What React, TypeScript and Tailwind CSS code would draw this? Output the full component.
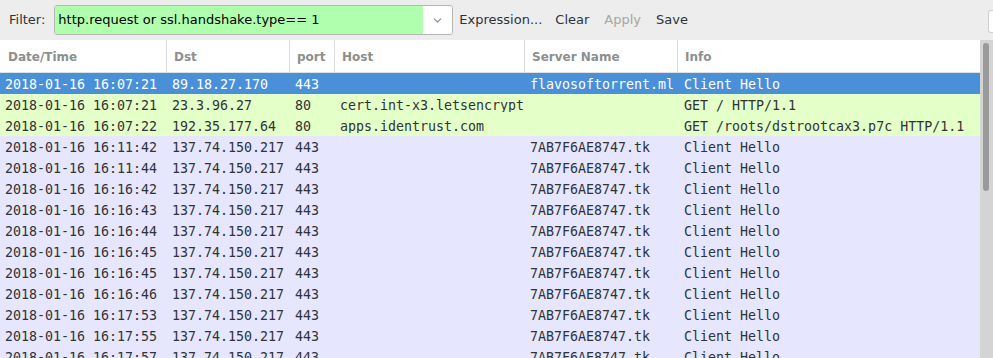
import { ChevronDown } from 'lucide-react'

type Packet = {
  time: string
  dst: string
  port: string
  host: string
  server: string
  info: string
  kind: 'selected' | 'http' | 'tcp'
}

const packets: Packet[] = [
  { time: '2018-01-16 16:07:21', dst: '89.18.27.170', port: '443', host: '', server: 'flavosoftorrent.ml', info: 'Client Hello', kind: 'selected' },
  { time: '2018-01-16 16:07:21', dst: '23.3.96.27', port: '80', host: 'cert.int-x3.letsencrypt', server: '', info: 'GET / HTTP/1.1', kind: 'http' },
  { time: '2018-01-16 16:07:22', dst: '192.35.177.64', port: '80', host: 'apps.identrust.com', server: '', info: 'GET /roots/dstrootcax3.p7c HTTP/1.1', kind: 'http' },
  { time: '2018-01-16 16:11:42', dst: '137.74.150.217', port: '443', host: '', server: '7AB7F6AE8747.tk', info: 'Client Hello', kind: 'tcp' },
  { time: '2018-01-16 16:11:44', dst: '137.74.150.217', port: '443', host: '', server: '7AB7F6AE8747.tk', info: 'Client Hello', kind: 'tcp' },
  { time: '2018-01-16 16:16:42', dst: '137.74.150.217', port: '443', host: '', server: '7AB7F6AE8747.tk', info: 'Client Hello', kind: 'tcp' },
  { time: '2018-01-16 16:16:43', dst: '137.74.150.217', port: '443', host: '', server: '7AB7F6AE8747.tk', info: 'Client Hello', kind: 'tcp' },
  { time: '2018-01-16 16:16:44', dst: '137.74.150.217', port: '443', host: '', server: '7AB7F6AE8747.tk', info: 'Client Hello', kind: 'tcp' },
  { time: '2018-01-16 16:16:45', dst: '137.74.150.217', port: '443', host: '', server: '7AB7F6AE8747.tk', info: 'Client Hello', kind: 'tcp' },
  { time: '2018-01-16 16:16:45', dst: '137.74.150.217', port: '443', host: '', server: '7AB7F6AE8747.tk', info: 'Client Hello', kind: 'tcp' },
  { time: '2018-01-16 16:16:46', dst: '137.74.150.217', port: '443', host: '', server: '7AB7F6AE8747.tk', info: 'Client Hello', kind: 'tcp' },
  { time: '2018-01-16 16:17:53', dst: '137.74.150.217', port: '443', host: '', server: '7AB7F6AE8747.tk', info: 'Client Hello', kind: 'tcp' },
  { time: '2018-01-16 16:17:55', dst: '137.74.150.217', port: '443', host: '', server: '7AB7F6AE8747.tk', info: 'Client Hello', kind: 'tcp' },
  { time: '2018-01-16 16:17:57', dst: '137.74.150.217', port: '443', host: '', server: '7AB7F6AE8747.tk', info: 'Client Hello', kind: 'tcp' },
]

const rowColors = {
  selected: 'bg-[#4a90d9] text-white',
  http: 'bg-[#e4ffc7] text-[#2e3436]',
  tcp: 'bg-[#e7e6ff] text-[#2e3436]',
}

const headers = ['Date/Time', 'Dst', 'port', 'Host', 'Server Name', 'Info']
const cols = 'grid grid-cols-[167px_123px_45px_190px_153px_1fr]'

export default function App() {
  return (
    <div className="w-[993px] h-[358px] overflow-hidden bg-[#ededed] flex flex-col" style={{ fontFamily: '"DejaVu Sans", sans-serif' }}>
      {/* Filter toolbar */}
      <div className="h-[40px] flex items-center text-[13px] text-[#2e3436] shrink-0">
        <span className="ml-[9px] mr-[9px]">Filter:</span>
        <div className="w-[399px] h-[30px] flex border border-[#b6b6b3] rounded-[3px] overflow-hidden">
          <div className="flex-1 bg-[#afffaf] flex items-center pl-[3px] text-black">
            http.request or ssl.handshake.type== 1
          </div>
          <div className="w-[29px] bg-white flex items-center justify-center">
            <ChevronDown className="w-[13px] h-[13px] text-[#888a85]" strokeWidth={2} />
          </div>
        </div>
        <span className="ml-[6px]">Expression...</span>
        <span className="ml-[13px]">Clear</span>
        <span className="ml-[15px] text-[#a5a7a3]">Apply</span>
        <span className="ml-[15px]">Save</span>
        <div className="ml-auto w-[5px] h-[23px] bg-white border-l border-y border-[#d0d0d0] rounded-l-[3px] self-end mb-[7px]" />
      </div>

      {/* Packet list */}
      <div className="flex-1 flex bg-white min-h-0">
        <div className="flex-1 flex flex-col min-w-0">
          <div className={`${cols} h-[33px] shrink-0 border-b border-[#e0e0e0] text-[12px] font-bold text-[#8d8f8c]`}>
            {headers.map((h, i) => (
              <div
                key={h}
                className={`flex items-center pt-[1px] ${i === 0 ? 'pl-[8px]' : 'pl-[7px]'} ${i < headers.length - 1 ? 'border-r border-[#dcdcdc]' : ''}`}
              >
                {h}
              </div>
            ))}
          </div>
          <div className="flex flex-col text-[13.3px] leading-none" style={{ fontFamily: '"DejaVu Sans Mono", monospace' }}>
            {packets.map((p, i) => (
              <div key={i} className={`${cols} h-[21px] shrink-0 items-center pt-[2px] whitespace-nowrap ${rowColors[p.kind]}`}>
                <span className="pl-[5px] overflow-hidden">{p.time}</span>
                <span className="pl-[5px] overflow-hidden">{p.dst}</span>
                <span className="pl-[5px] overflow-hidden">{p.port}</span>
                <span className="pl-[5px] overflow-hidden">{p.host}</span>
                <span className="pl-[5px] overflow-hidden">{p.server}</span>
                <span className="pl-[6px] overflow-hidden">{p.info}</span>
              </div>
            ))}
          </div>
        </div>
        {/* Scrollbar */}
        <div className="w-[13px] shrink-0 bg-[#d4d4d4] pt-[3px] pl-[3px]">
          <div className="w-[6px] h-[148px] rounded-full bg-[#9a9a9a]" />
        </div>
      </div>
    </div>
  )
}
